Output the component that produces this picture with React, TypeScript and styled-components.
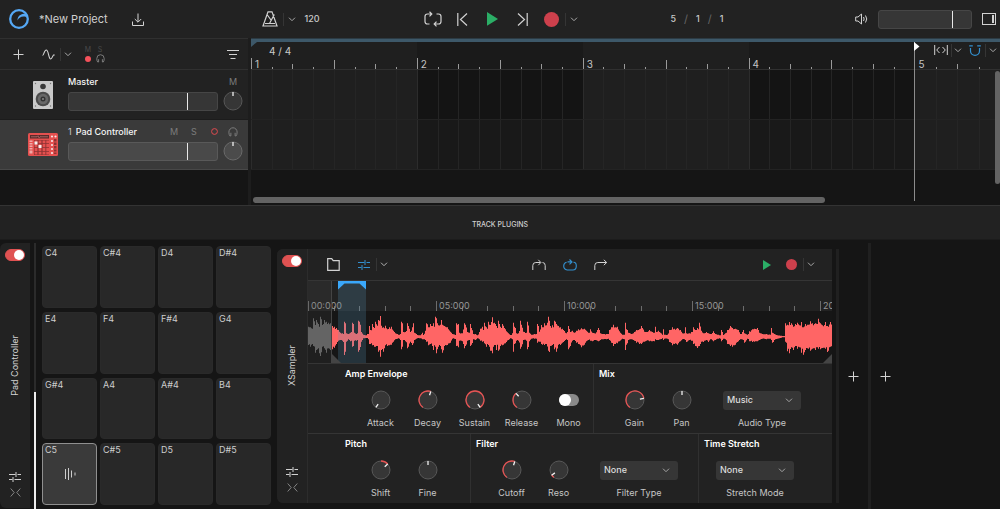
import React, { useState } from "react";
import styled, { createGlobalStyle, css } from "styled-components";

const GlobalStyle = createGlobalStyle`
  *, *::before, *::after { box-sizing: border-box; }
  html, body { margin: 0; padding: 0; background: #151515; }
  body { font-family: Inter, "Liberation Sans", sans-serif; font-size: 9px; line-height: 12px; color: #cacaca; }
  button, input, select { font: inherit; color: inherit; margin: 0; }
  svg { display: block; flex: none; }
`;

const Shell = styled.div`
  display: flex;
  flex-direction: column;
  min-height: 100vh;
  overflow: hidden;
`;

/* ---------- shared controls ---------- */

const IconButton = styled.button<{ $w?: number; $color?: string }>`
  display: flex;
  align-items: center;
  justify-content: center;
  flex: none;
  width: ${(p) => p.$w ?? 16}px;
  height: 18px;
  padding: 0;
  border: 0;
  background: none;
  color: ${(p) => p.$color ?? "#d2d2d2"};
  cursor: pointer;
`;

const Divider = styled.span`
  flex: none;
  width: 1px;
  height: 13px;
  background: #353535;
`;

const Fader = styled.input<{ $bright?: boolean }>`
  appearance: none;
  display: block;
  flex: 1;
  min-width: 0;
  width: 100%;
  height: 19px;
  border: 1px solid ${(p) => (p.$bright ? "#595959" : "#464646")};
  border-radius: 3px;
  background: ${(p) => (p.$bright ? "#494949" : "#363636")};
  &::-webkit-slider-thumb {
    appearance: none;
    width: 1px;
    height: 17px;
    background: #e8e8e8;
  }
`;

const SwitchInput = styled.input`
  appearance: none;
  flex: none;
  display: block;
  width: 20px;
  height: 12px;
  border-radius: 6px;
  background: #8a8a8a;
  cursor: pointer;
  &::before {
    content: "";
    display: block;
    width: 12px;
    height: 12px;
    border-radius: 6px;
    background: #fff;
  }
  &:checked {
    background: #e05252;
    padding-left: 8px;
    border: 1px solid #e05252;
  }
  &:checked::before { width: 10px; height: 10px; }
`;

const KnobBox = styled.span`
  position: relative;
  display: block;
  flex: none;
  width: 20px;
  height: 20px;
`;

const KnobInput = styled.input`
  position: absolute;
  inset: 0;
  width: 100%;
  height: 100%;
  opacity: 0;
  cursor: pointer;
`;

const polar = (deg: number, r: number) => {
  const a = ((deg - 90) * Math.PI) / 180;
  return `${(10 + r * Math.cos(a)).toFixed(2)} ${(10 + r * Math.sin(a)).toFixed(2)}`;
};

function Knob({ label, value, from, fill = "#363636", ring = "#585858" }: {
  label: string; value: number; from?: number; fill?: string; ring?: string;
}) {
  const [angle, setAngle] = useState(value);
  const start = from ?? angle;
  const lo = Math.min(start, angle);
  const hi = Math.max(start, angle);
  return (
    <KnobBox>
      <svg width="20" height="20" viewBox="0 0 20 20" fill="none">
        <circle cx="10" cy="10" r="9" fill={fill} stroke={ring} />
        {hi > lo && (
          <path d={`M${polar(lo, 9)}A9 9 0 ${hi - lo > 180 ? 1 : 0} 1 ${polar(hi, 9)}`} stroke="#e55353" strokeWidth="1.3" />
        )}
        <path d={`M${polar(angle, 5)}L${polar(angle, 9)}`} stroke="#f2f2f2" strokeWidth="1.3" />
      </svg>
      <KnobInput type="range" min={-145} max={145} value={angle} aria-label={label}
        onChange={(e) => setAngle(Number(e.target.value))} />
    </KnobBox>
  );
}

/* ---------- icons ---------- */

const Chevron = () => (
  <svg width="8" height="5" viewBox="0 0 8 5" fill="none" stroke="currentColor"><path d="M1 .7l3 3 3-3" /></svg>
);
const Plus = () => (
  <svg width="11" height="11" viewBox="0 0 11 11" stroke="currentColor"><path d="M5.5 .5v10M.5 5.5h10" /></svg>
);
const Headphones = ({ size = 10 }: { size?: number }) => (
  <svg width={size} height={size} viewBox="0 0 9 9" fill="none" stroke="currentColor">
    <path d="M2.6 8H1.7Q.8 7 .8 4.6A3.7 3.9 0 0 1 8.2 4.6Q8.2 7 7.3 8H6.4V5.2M2.6 8V5.2" strokeWidth=".9" />
  </svg>
);
const Logo = () => (
  <svg width="20" height="20" viewBox="0 0 20 20" fill="none">
    <circle cx="10" cy="10" r="8.8" stroke="#55a8f5" strokeWidth="2.3" />
    <path d="M17.6 6.2C16 4.4 14 4.600 12.200 5.400C9.500 6.600 8.200 8.800 8.600 11.400C9.500 9.100 11.500 7.700 14.500 7.500C16 7.400 17 7.900 18 8.800Z" fill="#55a8f5" />
  </svg>
);
const Download = () => (
  <svg width="12" height="13" viewBox="0 0 12 13" fill="none" stroke="currentColor">
    <path d="M6 .5v8.500M2.800 6L6 9.200 9.200 6M.5 8.500v4h11v-4" />
  </svg>
);
const Metronome = () => (
  <svg width="16" height="16" viewBox="0 0 16 16" fill="none" stroke="currentColor" strokeWidth="1.200">
    <path d="M6 .8h4L15 15H1L6 .8zM3 12.500h10M7.500 12.500L12.300 3.500M5 3.500L9 9" />
  </svg>
);
const Cycle = () => (
  <svg width="18" height="16" viewBox="0 0 18 16" fill="none" stroke="currentColor" strokeWidth="1.200">
    <path d="M7.500 3H3.500Q1 3 1 5.500v5Q1 13 3.500 13H5.500M5.500 .8L7.800 3 5.500 5.300M10.500 13h4Q17 13 17 10.500v-5Q17 3 14.500 3H12.500M12.500 10.700L10.200 13l2.300 2.300" />
  </svg>
);
const SkipBack = () => (
  <svg width="11" height="13" viewBox="0 0 11 13" fill="none" stroke="currentColor" strokeWidth="1.200"><path d="M.8 0v13M10 .5L3.500 6.500l6.500 6" /></svg>
);
const SkipForward = () => (
  <svg width="11" height="13" viewBox="0 0 11 13" fill="none" stroke="currentColor" strokeWidth="1.200"><path d="M10.200 0v13M1 .5l6.500 6L1 12.500" /></svg>
);
const PlayShape = ({ size }: { size: number }) => (
  <svg width={size} height={size * 1.25} viewBox="0 0 8 10"><path d="M0 0L8 5 0 10z" fill="#2bae66" /></svg>
);
const RecordShape = ({ size, color = "#cd404c" }: { size: number; color?: string }) => (
  <svg width={size} height={size} viewBox="0 0 10 10"><circle cx="5" cy="5" r="5" fill={color} /></svg>
);
const Speaker = () => (
  <svg width="13" height="12" viewBox="0 0 13 12" fill="none" stroke="currentColor">
    <path d="M.7 4v4H3l3.500 3V1L3 4H.7zM8.500 4q1.300 2 0 4M10.500 2.500q2.500 3.500 0 7" />
  </svg>
);
const SidePanel = () => (
  <svg width="14" height="12" viewBox="0 0 14 12" fill="none" stroke="currentColor">
    <rect x=".5" y=".5" width="13" height="11" /><path d="M11 2v8" strokeWidth="2" />
  </svg>
);
const Curve = () => (
  <svg width="13" height="11" viewBox="0 0 13 11" fill="none" stroke="currentColor" strokeWidth="1.100">
    <path d="M.5 6.500C2 6.500 2 1 4.300 1S6.500 10 8.700 10c1.500 0 1.800-3.500 3-4" /><circle cx="12" cy="6" r=".7" fill="currentColor" stroke="none" />
  </svg>
);
const FilterLines = () => (
  <svg width="12" height="9" viewBox="0 0 12 9" stroke="currentColor"><path d="M0 .5h12M2 4.500h8M3.500 8.500h5" /></svg>
);
const FitWidth = () => (
  <svg width="14" height="10" viewBox="0 0 14 10" fill="none" stroke="currentColor"><path d="M.7 0v10M13.300 0v10M5.500 2L2.700 5l2.800 3M8.500 2l2.800 3-2.800 3" /></svg>
);
const Magnet = () => (
  <svg width="12" height="11" viewBox="0 0 12 11" fill="none" stroke="currentColor" strokeWidth="1.200">
    <path d="M.2 .8h3.600M8.200 .8h3.600M1.500 3v3a4.500 4.300 0 0 0 9 0V3" />
  </svg>
);
const Mixer = () => (
  <svg width="12" height="10" viewBox="0 0 12 10" fill="none" stroke="currentColor">
    <path d="M0 2.500h6.500M8.500 2.500H12M7 0v5M0 7.500h3.500M5.500 7.500H12M4 5v5" />
  </svg>
);
const Collapse = () => (
  <svg width="11" height="9" viewBox="0 0 11 9" fill="none" stroke="currentColor" strokeWidth=".9"><path d="M.7 .5l3.500 4-3.500 4M10.300 .5l-3.500 4 3.500 4" /></svg>
);
const Folder = () => (
  <svg width="13" height="13" viewBox="0 0 13 13" fill="none" stroke="currentColor" strokeWidth="1.200"><path d="M.7 .7h4l1.500 2h6v9.600H.7z" /></svg>
);
const TrimLeft = () => (
  <svg width="14" height="12" viewBox="0 0 14 12" fill="none" stroke="currentColor">
    <path d="M.8 11V6.500Q.8 3.500 3.800 3.500H8.500M6.300 .8L8.900 3.500 6.300 6.200M10.500 3.500Q13.200 3.500 13.200 6.500V11" />
  </svg>
);
const LoopMode = () => (
  <svg width="14" height="12" viewBox="0 0 14 12" fill="none" stroke="currentColor" strokeWidth="1.100">
    <path d="M3.600 3.200Q.7 3.800 .7 7T4.200 11h5.600q3.500 0 3.500-4T10.400 3.200M4.500 2.900H8.800M6.500 .5L9 2.900 6.500 5.300" />
  </svg>
);
const OneShot = () => (
  <svg width="14" height="12" viewBox="0 0 14 12" fill="none" stroke="currentColor">
    <path d="M.8 11V6.500Q.8 3.500 3.800 3.500H12.500M9.800 .8l2.900 2.700-2.900 2.700" />
  </svg>
);
const PadWave = () => (
  <svg width="12" height="12" viewBox="0 0 12 12" stroke="currentColor"><path d="M1.500 1v10M4.500 0v12M7.500 2.500v7M11 4.500v3" /></svg>
);
const Monitor = () => (
  <svg width="20" height="28" viewBox="0 0 20 28">
    <rect width="20" height="28" rx="1" fill="#c9c9c9" />
    <g fill="#777"><circle cx="2.500" cy="2.500" r=".7" /><circle cx="17.500" cy="2.500" r=".7" /><circle cx="2.500" cy="25" r=".7" /><circle cx="17.500" cy="25" r=".7" /></g>
    <circle cx="10" cy="5.500" r="2.800" fill="#3a3a3a" />
    <circle cx="10" cy="18" r="7.300" fill="#4a4a4a" /><circle cx="10" cy="18" r="5.200" fill="#686868" />
    <circle cx="10" cy="18" r="2.500" fill="#333" /><circle cx="10" cy="18" r="1" fill="#888" />
  </svg>
);
const DrumMachine = () => (
  <svg width="30" height="23" viewBox="0 0 30 23">
    <rect width="30" height="23" rx="1.500" fill="#e4504f" />
    <rect x="2" y="2" width="19" height="3.500" fill="#5a2b2b" /><path d="M3 3.800h6l1-1 1 2 1-1h8" stroke="#ee9a98" strokeWidth=".5" fill="none" />
    <path d="M1.500 7.500h3v13h-3z" fill="#f0a8a6" /><path d="M1 9.500h4M1 12h4M1 14.500h4M1 17h4" stroke="#e4504f" />
    <rect x="6" y="7" width="15" height="15" fill="#8e3333" />
    <path d="M8 7.500v14M12 7.500v14M16 7.500v14M19.700 7.500v14" stroke="#e4504f" strokeWidth="2.800" />
    <path d="M6 10.500h15M6 14.500h15M6 18.500h15" stroke="#8e3333" strokeWidth=".8" />
    <path d="M6.500 8.500h3v3h-3zM10.500 12h3v3h-3z" fill="#f6eeee" />
    <g fill="#f6e4e4"><circle cx="24" cy="3.500" r="1.100" /><circle cx="27.500" cy="3.500" r="1.100" /><circle cx="24" cy="8" r="1.100" /><circle cx="24" cy="12" r="1.100" /><circle cx="24" cy="16" r="1.100" /><circle cx="24" cy="20" r="1.100" /></g>
    <path d="M26 6h2.500v15H26z" fill="#8e3333" /><path d="M26 9h3M26 12.500h3M26 16h3M26 19h3" stroke="#e4504f" />
  </svg>
);

/* ---------- top bar ---------- */

const TopBar = styled.header`
  display: grid;
  grid-template-columns: 1fr auto 1fr;
  align-items: center;
  height: 38px;
  background: #222;
`;
const Group = styled.div<{ $gap?: number; $end?: boolean }>`
  display: flex;
  align-items: center;
  gap: ${(p) => p.$gap ?? 0}px;
  ${(p) => p.$end && css`justify-content: flex-end;`}
`;
const TopLeft = styled(Group)`
  justify-content: space-between;
  padding: 0 103px 0 9px;
`;
const TopRight = styled(Group)`
  justify-content: space-between;
  padding: 0 3px 0 93px;
`;
const ProjectName = styled.h1`
  margin: 0 14px 0 2px;
  font-size: 11px;
  line-height: 14px;
  font-weight: 400;
  color: #d0d0d0;
`;
const Readout = styled.span`
  font-weight: 500;
  color: #c8c8c8;
`;
const Slash = styled.span`
  color: #666;
  font-size: 11px;
`;
const VolumeWrap = styled.div`
  display: flex;
  width: 94px;
`;

/* ---------- arrangement ---------- */

const Arrangement = styled.section`
  display: flex;
  height: 167px;
  background: #151515;
`;
const TrackColumn = styled.div`
  flex: none;
  width: 251px;
  border-right: 3px solid #1d1d1d;
`;
const TrackTools = styled.div`
  display: flex;
  align-items: center;
  gap: 2px;
  height: 32px;
  padding: 0 7px 0 10px;
  background: #222;
  border-top: 1px solid #303030;
  border-bottom: 1px solid #303030;
`;
const ToolSpacer = styled.span`
  flex: 1;
`;
const GlobalFlags = styled.div`
  display: grid;
  grid-template-columns: 12px 12px;
  grid-template-rows: 9px 9px;
  margin-left: 8px;
`;
const Flag = styled.button<{ $color?: string }>`
  display: flex;
  align-items: center;
  justify-content: center;
  padding: 0;
  border: 0;
  background: none;
  font-size: 7px;
  line-height: 9px;
  color: ${(p) => p.$color ?? "#4a4a4a"};
`;
const TrackRow = styled.div<{ $active?: boolean }>`
  display: grid;
  grid-template-columns: 68px 1fr 30px;
  align-items: center;
  height: 50px;
  background: ${(p) => (p.$active ? "#3a3a3a" : "#222")};
  border-bottom: 1px solid ${(p) => (p.$active ? "#484848" : "#1c1c1c")};
`;
const TrackIcon = styled.span`
  display: flex;
  justify-content: center;
  padding-left: 18px;
`;
const TrackMain = styled.div`
  display: flex;
  flex-direction: column;
  gap: 3px;
  padding-bottom: 4px;
`;
const TrackHead = styled.div`
  display: flex;
  align-items: center;
  height: 14px;
  gap: 4px;
`;
const TrackName = styled.span`
  flex: 1;
  font-weight: 500;
  color: #f4f4f4;
`;
const TrackEnd = styled(TrackMain)`
  align-items: center;
  gap: 2px;
`;
const TrackFlag = styled.button<{ $color?: string }>`
  display: flex;
  align-items: center;
  justify-content: center;
  width: 8px;
  height: 14px;
  padding: 0;
  border: 0;
  background: none;
  color: ${(p) => p.$color ?? "#7c7c7c"};
`;

const Timeline = styled.div`
  position: relative;
  flex: 1;
  min-width: 0;
  display: flex;
  flex-direction: column;
`;
const LoopStrip = styled.div`
  height: 4px;
  background: #3d5869;
  border-top: 1px solid #2c3b44;
`;
const LoopStart = styled.svg`
  position: absolute;
  top: 4px;
  left: 0;
  z-index: 1;
`;
const Bars = styled.div`
  display: flex;
`;
const Bar = styled.div<{ $grow: number }>`
  position: relative;
  flex: ${(p) => p.$grow} 1 0;
  min-width: 0;
`;
const BarRuler = styled.div<{ $dark: boolean }>`
  position: relative;
  display: flex;
  align-items: flex-end;
  height: 28px;
  background: ${(p) => (p.$dark ? "#1a1a1a" : "#1f1f1f")};
  border-bottom: 1px solid #303030;
`;
const BarNumber = styled.span`
  position: absolute;
  left: 4px;
  bottom: -1px;
  font-size: 10px;
  color: #c4c4c4;
`;
const Tick = styled.span<{ $h: number }>`
  flex: 1;
  height: ${(p) => p.$h}px;
  border-left: 1px solid #9a9a9a;
`;
const Lane = styled.div<{ $bg: string }>`
  display: flex;
  height: 50px;
  background: ${(p) => p.$bg};
  border-bottom: 1px solid #232323;
`;
const LaneCell = styled.span<{ $strong: boolean }>`
  flex: 1;
  border-left: 1px solid ${(p) => (p.$strong ? "#2c2c2c" : "#252525")};
`;
const Playhead = styled.div`
  position: absolute;
  z-index: 2;
  top: 0;
  left: 0;
  width: 1px;
  height: 159px;
  background: #8c8c8c;
`;
const PlayheadFlag = styled.svg`
  position: absolute;
  top: 0;
  left: 0;
`;
const Signature = styled.span`
  position: absolute;
  top: 7px;
  left: 18px;
  font-size: 10px;
  color: #cacaca;
`;
const TimelineTools = styled.div`
  position: absolute;
  top: 3px;
  right: 3px;
  display: flex;
  align-items: center;
  gap: 6px;
`;
const ScrollX = styled.div`
  position: absolute;
  left: 2px;
  right: 175px;
  bottom: 2px;
  height: 6px;
  border-radius: 3px;
  background: #636363;
`;
const ScrollY = styled.div`
  position: absolute;
  right: 0;
  top: 33px;
  width: 5px;
  height: 113px;
  border-radius: 3px;
  background: #636363;
`;

/* ---------- plugin rack ---------- */

const RackTitle = styled.h2`
  margin: 0;
  height: 35px;
  border-top: 1px solid #333;
  border-bottom: 1px solid #1c1c1c;
  background: #222;
  font-size: 7px;
  line-height: 37px;
  font-weight: 500;
  text-align: center;
  color: #cfcfcf;
`;
const Rack = styled.section`
  flex: 1;
  display: flex;
  align-items: stretch;
  background: #151515;
`;
const Strip = styled.div`
  display: flex;
  flex-direction: column;
  align-items: center;
  justify-content: space-between;
  flex: none;
  width: 30px;
  padding: 6px 0 8px;
  background: #222;
  border-radius: 6px 0 0 6px;
`;
const PadStripWrap = styled.div`
  display: flex;
  padding: 3px 0 1px;
`;
const StripName = styled.span`
  writing-mode: vertical-rl;
  transform: rotate(180deg);
  color: #d4d4d4;
`;
const StripButtons = styled.div`
  display: flex;
  flex-direction: column;
  align-items: center;
  gap: 1px;
`;
const StripButton = styled(IconButton)`
  height: 15px;
`;
const PadScroll = styled.div`
  display: flex;
  flex-direction: column;
  justify-content: flex-end;
  flex: none;
  width: 2px;
  margin: 3px 6px 0 4px;
  background: #2b2b2b;
`;
const PadThumb = styled.div`
  height: 44%;
  background: #ededed;
`;
const PadGrid = styled.div`
  flex: none;
  display: grid;
  grid-template-columns: repeat(4, 55px);
  grid-auto-rows: 1fr;
  gap: 4px 3px;
  padding: 6px 0 4px;
`;
const Pad = styled.button<{ $active: boolean }>`
  display: flex;
  flex-direction: column;
  align-items: stretch;
  padding: 0 2px;
  border: 1px solid ${(p) => (p.$active ? "#8f8f8f" : "#2a2a2a")};
  border-radius: 4px;
  background: ${(p) => (p.$active ? "#3a3a3a" : "#282828")};
  text-align: left;
  color: #cdcdcd;
`;
const PadIcon = styled.span`
  flex: 1;
  display: flex;
  align-items: center;
  justify-content: center;
  padding-bottom: 12px;
`;
const Sampler = styled.article`
  flex: 1;
  min-width: 0;
  display: flex;
  margin: 9px 4px 6px 6px;
  border-radius: 6px 0 0 6px;
  background: #222;
`;
const SamplerBody = styled.div`
  flex: 1;
  min-width: 0;
  display: flex;
  flex-direction: column;
  border-left: 1px solid #2c2c2c;
`;
const SamplerBar = styled.div`
  display: grid;
  grid-template-columns: 1fr auto 1fr;
  align-items: center;
  height: 32px;
  padding: 0 17px;
  border-bottom: 1px solid #353535;
`;
const WaveArea = styled.div`
  position: relative;
  flex: none;
  height: 82px;
  overflow: hidden;
  background: #161616;
`;
const WaveRuler = styled.div`
  display: flex;
  height: 30px;
  background: #222;
`;
const RulerMark = styled.div`
  position: relative;
  flex: none;
  display: flex;
  align-items: flex-end;
  width: 128px;
  color: #969696;
`;
const RulerLabel = styled.span`
  position: absolute;
  left: 3px;
  bottom: -1px;
`;
const RulerTick = styled.span<{ $major: boolean }>`
  flex: 1;
  height: ${(p) => (p.$major ? 10 : 5)}px;
  border-left: 1px solid #6c6c6c;
`;
const WaveSvg = styled.svg`
  width: 100%;
  height: 52px;
`;
const WaveHead = styled.div`
  position: absolute;
  top: 0;
  left: 0;
  bottom: 0;
  width: 24px;
  background: rgba(90, 90, 90, 0.14);
  border-right: 1px solid #444;
`;
const Region = styled.div`
  position: absolute;
  top: 0;
  left: 30px;
  bottom: 0;
  width: 28px;
  background: rgba(90, 155, 190, 0.22);
`;
const CornerMark = styled.svg<{ $right?: boolean }>`
  position: absolute;
  bottom: 0;
  ${(p) => (p.$right ? css`right: 0;` : css`left: 24px;`)}
`;
const ParamRow = styled.div`
  flex: 1 0 70px;
  display: flex;
  border-top: 1px solid #353535;
`;
const Section = styled.section<{ $grow?: boolean; $first?: boolean }>`
  min-width: 0;
  display: flex;
  flex-direction: column;
  flex: ${(p) => (p.$grow ? "1 0 0" : "none")};
  padding: 4px 0 0 ${(p) => (p.$first ? 37 : 5)}px;
  border-left: ${(p) => (p.$first ? 0 : 1)}px solid #303030;
`;
const SectionTitle = styled.h3`
  margin: 0;
  font-size: 9px;
  font-weight: 600;
  color: #fff;
`;
const Params = styled.div<{ $end?: number }>`
  display: flex;
  padding: 10px ${(p) => p.$end ?? 0}px 0 12px;
`;
const Param = styled.label<{ $select?: boolean }>`
  display: flex;
  flex-direction: column;
  align-items: center;
  gap: 7px;
  flex: none;
  width: ${(p) => (p.$select ? 78 : 47)}px;
  white-space: nowrap;
  color: #c6c6c6;
  &:not(:first-child) { margin-left: ${(p) => (p.$select ? 18 : 0)}px; }
`;
const ParamControl = styled.span`
  display: flex;
  align-items: center;
  justify-content: center;
  position: relative;
  width: 100%;
  height: 20px;
`;
const Select = styled.select`
  appearance: none;
  width: 100%;
  height: 19px;
  padding: 0 4px;
  border: 0;
  border-radius: 3px;
  background: #363636;
  font-weight: 500;
  color: #dcdcdc;
`;
const SelectArrow = styled.span`
  position: absolute;
  right: 8px;
  top: 8px;
  color: #a4a4a4;
  pointer-events: none;
`;
const AddColumn = styled.div<{ $short?: boolean }>`
  flex: none;
  display: flex;
  align-items: center;
  width: ${(p) => (p.$short ? 32 : 132)}px;
  margin: ${(p) => (p.$short ? "9px 0 6px" : "3px 0 0")};
  padding-left: 3px;
  border-left: 3px solid #202020;
`;

/* Each sample is "position,above,below"; every take starts at its own offset. */
const TAKES: [number, string][] = [
  [-12, "13,30,25 20,28,30 26,24,22 29,55,28 33,35,48 38,50,40 42,38,35 47,30,50 50,60,58 54,35,30 60,50,35 66,45,48 72,42,35 78,40,40 82,38,30 84,32,38 90,30,33 96,26,22 102,20,12 108,12,10 114,10,12 119,8,16 121,45,55 125,40,45 128,10,15 133,8,8 138,12,14 142,14,12 144,42,30 147,38,28 150,12,12 157,8,12 161,10,10 163,48,45 167,45,40 171,14,15 178,6,5 186,4,4 190,8,4 194,8,8 197,32,22 200,20,22 206,38,26 210,26,30 215,45,30 220,33,28 224,50,45 228,62,60 232,33,40 238,28,45 244,33,26 250,22,28 255,28,26 262,30,24 268,18,15 275,10,8 283,6,5 289,8,10 291,45,38 295,40,30 298,14,10 305,14,14 309,40,35 313,32,30 318,14,15 324,28,25 328,40,20 332,12,10 340,5,5 347,4,5 354,12,8 358,5,8 364,18,10 368,40,15 374,28,26 380,38,22 387,40,40 391,30,26 394,60,30 397,55,50 402,34,30 408,36,28 412,50,38 416,36,48 422,32,28 430,28,25 438,15,18 446,8,6 454,5,7 458,40,28 462,38,32 466,12,12 475,10,14 480,40,35 485,36,28 490,14,12 495,12,10 498,38,28 503,26,24 508,8,8 514,8,10 520,4,5 525,14,8"],
  [516, "2,24,12 6,30,15 9,20,14 12,42,20 18,28,30 21,24,22 24,45,25 30,35,42 36,58,50 40,40,30 44,42,25 50,32,40 53,26,24 56,48,42 62,30,28 68,38,26 76,22,20 84,10,10 92,5,5 97,10,8 100,42,45 104,30,22 110,10,12 116,10,12 120,48,36 124,36,30 130,15,10 139,12,12 143,45,38 147,12,14 155,6,6 163,8,6 170,8,6 173,38,18 178,15,15 183,35,22 188,28,24 193,40,25 198,34,22 204,60,42 208,48,46 212,32,28 218,34,25 221,28,22 224,48,38 230,38,45 236,32,24 242,28,25 250,20,16 258,10,8 263,14,10 266,32,38 270,14,28 276,18,12 282,12,10 288,18,18 296,22,22 304,25,32 312,24,24 320,18,14 326,12,10 331,22,12 336,12,14 344,10,10 352,20,12 356,26,14 360,10,10 370,8,8 378,8,8 384,8,6 388,20,10 394,28,18 399,36,28 405,28,22 411,30,20 418,16,14 426,6,6 433,6,8 436,42,40 440,22,24 446,12,10 454,8,8 462,14,12 470,20,18 478,22,22 485,32,22 492,15,15 500,14,12 508,20,14 516,14,14 522,12,14 527,30,8"],
  [1044, "1,14,10 6,18,10 14,12,8 20,6,5 22,22,10 26,6,6 34,6,6 40,20,16 48,28,26 56,24,22 64,26,24 72,20,14 80,10,8 86,10,8 88,28,10 92,10,16 100,10,10 107,14,12 112,28,22 118,20,28 125,26,34 129,20,26 131,42,28 135,18,15 142,10,16 150,14,10 156,10,16 164,8,8 172,16,14 178,8,10 186,6,6 193,4,6 197,20,14 201,5,6 208,10,8 214,20,22 222,32,28 230,26,30 238,24,24 246,20,14 254,8,8 261,20,10 266,10,18 274,6,6 280,16,14 288,22,16 296,24,15 304,26,14 310,12,10 320,8,6 330,8,8 343,6,6 346,26,10 350,12,18 356,8,10 364,4,6 372,3,4 380,2,2 387,2,2 389,40,15 394,36,44 397,34,36 400,44,50 406,40,32 412,30,40 418,38,28 424,42,36 430,34,32 437,44,48 440,28,36 442,28,54 448,38,40 456,36,36 464,46,42 470,40,36 478,40,40 484,38,32 486,54,36 492,40,38 500,34,34 508,44,36 512,32,32 515,32,46 523,44,30 528,36,36"],
];

const WAVE_MID = 77;
const STEP = 3;
const peaks = TAKES.flatMap(([start, text]) =>
  text.split(" ").map((s) => {
    const [x, up, down] = s.split(",").map(Number);
    return { x: x + start, up, down };
  })
);

/* Deterministic grain, so that columns between two peaks vary a little. */
const grain = (i: number) => {
  const v = Math.sin(i * 12.9898) * 43758.5453;
  return v - Math.floor(v);
};
const columns = Array.from({ length: 524 }, (_, i) => {
  const lo = i * STEP;
  const hit = peaks.filter((p) => p.x >= lo && p.x < lo + STEP);
  if (hit.length) {
    return { x: lo, up: Math.max(...hit.map((p) => p.up)), down: Math.max(...hit.map((p) => p.down)) };
  }
  const next = Math.max(1, peaks.findIndex((p) => p.x >= lo));
  const a = peaks[next - 1];
  const b = peaks[next];
  const t = Math.min(1, Math.max(0, (lo - a.x) / (b.x - a.x)));
  const mix = (m: number, n: number, seed: number) => (m + (n - m) * t) * (0.82 + 0.16 * grain(seed));
  return { x: lo, up: mix(a.up, b.up, i), down: mix(a.down, b.down, i + 900) };
});
/* One closed outline: along the upper steps, then back along the lower ones. */
const wavePath = (list: typeof columns) => {
  const top = list.map((c) => `${c.x} ${(WAVE_MID - c.up).toFixed(1)}h${STEP}`).join("L");
  const bottom = [...list].reverse().map((c) => `${c.x + STEP} ${(WAVE_MID + c.down).toFixed(1)}h-${STEP}`).join("L");
  return `M${top}L${bottom}Z`;
};
const HEAD_COLUMNS = 24;
const headWave = wavePath(columns.slice(0, HEAD_COLUMNS));
const mainWave = wavePath(columns.slice(HEAD_COLUMNS));

const BAR_LIST = [
  { n: 1, cells: 8, grow: 31 },
  { n: 2, cells: 8, grow: 31 },
  { n: 3, cells: 8, grow: 31 },
  { n: 4, cells: 8, grow: 31 },
  { n: 5, cells: 4, grow: 16 },
];
const tickHeight = (i: number) => (i === 0 ? 11 : i === 4 ? 9 : i % 2 === 0 ? 5 : 2);

const PADS = ["C4", "C#4", "D4", "D#4", "E4", "F4", "F#4", "G4", "G#4", "A4", "A#4", "B4", "C5", "C#5", "D5", "D#5"];

function KnobParam({ label, value, from }: { label: string; value: number; from?: number }) {
  return (
    <Param>
      <ParamControl><Knob label={label} value={value} from={from} /></ParamControl>
      {label}
    </Param>
  );
}

function SelectParam({ label, value, options }: { label: string; value: string; options: string[] }) {
  return (
    <Param $select>
      <ParamControl>
        <Select defaultValue={value}>{options.map((o) => <option key={o}>{o}</option>)}</Select>
        <SelectArrow><Chevron /></SelectArrow>
      </ParamControl>
      {label}
    </Param>
  );
}

function StripContent({ name }: { name: string }) {
  return (
    <Strip>
      <SwitchInput type="checkbox" defaultChecked aria-label={`${name} on`} />
      <StripName>{name}</StripName>
      <StripButtons>
        <StripButton aria-label="Parameters"><Mixer /></StripButton>
        <StripButton aria-label="Collapse" $color="#8f8f8f"><Collapse /></StripButton>
      </StripButtons>
    </Strip>
  );
}

export default function App() {
  const [activePad, setActivePad] = useState("C5");
  return (
    <Shell>
      <GlobalStyle />
      <TopBar>
        <TopLeft>
          <Group $gap={8}>
            <Logo />
            <ProjectName>*New Project</ProjectName>
            <IconButton aria-label="Save"><Download /></IconButton>
          </Group>
          <Group $gap={8}>
            <Group $gap={4}>
              <IconButton $w={18} aria-label="Metronome"><Metronome /></IconButton>
              <Divider />
              <IconButton $w={8} $color="#a8a8a8" aria-label="Metronome options"><Chevron /></IconButton>
            </Group>
            <Readout>120</Readout>
          </Group>
        </TopLeft>
        <Group $gap={11}>
          <IconButton $w={20} aria-label="Cycle"><Cycle /></IconButton>
          <IconButton $w={18} aria-label="To start"><SkipBack /></IconButton>
          <IconButton $w={20} aria-label="Play"><PlayShape size={11} /></IconButton>
          <IconButton $w={18} aria-label="To end"><SkipForward /></IconButton>
          <Group $gap={4}>
            <IconButton $w={18} aria-label="Record"><RecordShape size={15} /></IconButton>
            <Divider />
            <IconButton $w={8} $color="#a8a8a8" aria-label="Record options"><Chevron /></IconButton>
          </Group>
        </Group>
        <TopRight>
          <Group $gap={8}>
            <Readout>5</Readout><Slash>/</Slash>
            <Readout>1</Readout><Slash>/</Slash>
            <Readout>1</Readout>
          </Group>
          <Group $gap={9}>
            <IconButton $w={16} aria-label="Mute output"><Speaker /></IconButton>
            <VolumeWrap><Fader type="range" defaultValue={80} aria-label="Output volume" /></VolumeWrap>
            <IconButton $w={16} aria-label="Side panel"><SidePanel /></IconButton>
          </Group>
        </TopRight>
      </TopBar>

      <Arrangement>
        <TrackColumn>
          <TrackTools>
            <Group $gap={12}>
              <IconButton aria-label="Add track"><Plus /></IconButton>
              <IconButton $w={20} aria-label="Automation"><Curve /></IconButton>
            </Group>
            <Group $gap={3}>
              <Divider />
              <IconButton $w={8} $color="#a8a8a8" aria-label="Automation options"><Chevron /></IconButton>
            </Group>
            <GlobalFlags>
              <Flag>M</Flag>
              <Flag>S</Flag>
              <Flag aria-label="Record all"><RecordShape size={6} color="#f5515b" /></Flag>
              <Flag aria-label="Monitor all" $color="#858585"><Headphones size={9} /></Flag>
            </GlobalFlags>
            <ToolSpacer />
            <IconButton aria-label="Filter tracks"><FilterLines /></IconButton>
          </TrackTools>
          <TrackRow>
            <TrackIcon><Monitor /></TrackIcon>
            <TrackMain>
              <TrackHead><TrackName>Master</TrackName></TrackHead>
              <Fader type="range" defaultValue={80} aria-label="Master volume" />
            </TrackMain>
            <TrackEnd>
              <TrackFlag>M</TrackFlag>
              <Knob label="Master pan" value={0} />
            </TrackEnd>
          </TrackRow>
          <TrackRow $active>
            <TrackIcon><DrumMachine /></TrackIcon>
            <TrackMain>
              <TrackHead>
                <span>1</span>
                <TrackName>Pad Controller</TrackName>
                <Group $gap={12}>
                  <TrackFlag>M</TrackFlag>
                  <TrackFlag>S</TrackFlag>
                  <TrackFlag aria-label="Arm" $color="#e04b50">
                    <svg width="7" height="7" viewBox="0 0 7 7" fill="none" stroke="currentColor"><circle cx="3.5" cy="3.5" r="2.9" /></svg>
                  </TrackFlag>
                </Group>
              </TrackHead>
              <Fader $bright type="range" defaultValue={80} aria-label="Pad Controller volume" />
            </TrackMain>
            <TrackEnd>
              <TrackFlag aria-label="Monitor"><Headphones /></TrackFlag>
              <Knob label="Pad Controller pan" value={0} fill="#4b4b4b" ring="#6a6a6a" />
            </TrackEnd>
          </TrackRow>
        </TrackColumn>

        <Timeline>
          <LoopStrip />
          <LoopStart width="6" height="5" viewBox="0 0 6 5"><path d="M0 0h6L0 5z" fill="#3d5869" /></LoopStart>
          <Bars>
            {BAR_LIST.map(({ n, cells, grow }) => {
              const dark = n % 2 === 0;
              const idx = Array.from({ length: cells }, (_, i) => i);
              return (
                <Bar key={n} $grow={grow}>
                  <BarRuler $dark={dark}>
                    {idx.map((i) => <Tick key={i} $h={tickHeight(i)} />)}
                    <BarNumber>{n}</BarNumber>
                  </BarRuler>
                  <Lane $bg={dark ? "#141414" : "#1f1f1f"}>{idx.map((i) => <LaneCell key={i} $strong={i === 0} />)}</Lane>
                  <Lane $bg={dark ? "#191919" : "#1f1f1f"}>{idx.map((i) => <LaneCell key={i} $strong={i === 0} />)}</Lane>
                  {n === 5 && (
                    <Playhead>
                      <PlayheadFlag width="6" height="9" viewBox="0 0 6 9"><path d="M0 0l5.500 4.500L0 9z" fill="#fff" /></PlayheadFlag>
                    </Playhead>
                  )}
                </Bar>
              );
            })}
          </Bars>
          <Signature>4 / 4</Signature>
          <TimelineTools>
            <Group $gap={2}>
              <IconButton aria-label="Fit to width"><FitWidth /></IconButton>
              <Divider />
              <IconButton $w={8} $color="#a8a8a8" aria-label="Fit options"><Chevron /></IconButton>
            </Group>
            <Group $gap={3}>
              <IconButton $w={14} $color="#3390cf" aria-label="Snap"><Magnet /></IconButton>
              <Divider />
              <IconButton $w={8} $color="#a8a8a8" aria-label="Snap options"><Chevron /></IconButton>
            </Group>
          </TimelineTools>
          <ScrollX />
          <ScrollY />
        </Timeline>
      </Arrangement>

      <RackTitle>TRACK PLUGINS</RackTitle>

      <Rack>
        <PadStripWrap><StripContent name="Pad Controller" /></PadStripWrap>
        <PadScroll><PadThumb /></PadScroll>
        <PadGrid>
          {PADS.map((p) => (
            <Pad key={p} $active={p === activePad} onClick={() => setActivePad(p)}>
              {p}
              {p === "C5" && <PadIcon><PadWave /></PadIcon>}
            </Pad>
          ))}
        </PadGrid>

        <Sampler>
          <StripContent name="XSampler" />
          <SamplerBody>
            <SamplerBar>
              <Group $gap={4}>
                <Group $gap={15}>
                  <IconButton aria-label="Open sample"><Folder /></IconButton>
                  <IconButton $color="#3390cf" aria-label="Parameters"><Mixer /></IconButton>
                </Group>
                <Group $gap={3}>
                  <Divider />
                  <IconButton $w={8} $color="#b4b4b4" aria-label="View options"><Chevron /></IconButton>
                </Group>
              </Group>
              <Group $gap={15}>
                <IconButton aria-label="Trigger"><TrimLeft /></IconButton>
                <IconButton $color="#3390cf" aria-label="Loop"><LoopMode /></IconButton>
                <IconButton aria-label="One shot"><OneShot /></IconButton>
              </Group>
              <Group $end $gap={4}>
                <Group $gap={8}>
                  <IconButton aria-label="Play sample"><PlayShape size={8} /></IconButton>
                  <IconButton aria-label="Record sample"><RecordShape size={11} /></IconButton>
                </Group>
                <Group $gap={3}>
                  <Divider />
                  <IconButton $w={8} $color="#a8a8a8" aria-label="Record options"><Chevron /></IconButton>
                </Group>
              </Group>
            </SamplerBar>

            <WaveArea>
              <WaveRuler>
                {["00:000", "05:000", "10:000", "15:000", "20:000"].map((t) => (
                  <RulerMark key={t}>
                    {[0, 1, 2, 3, 4].map((i) => <RulerTick key={i} $major={i === 0} />)}
                    <RulerLabel>{t}</RulerLabel>
                  </RulerMark>
                ))}
              </WaveRuler>
              <WaveSvg viewBox="0 0 1572 156" preserveAspectRatio="none">
                <path d={headWave} fill="#666" />
                <path d={mainWave} fill="#ff6565" />
              </WaveSvg>
              <WaveHead />
              <Region>
                <svg width="28" height="9" viewBox="0 0 28 9"><path d="M0 0h28v8.500L21.500 2.500h-15L0 8.500z" fill="#3aa8fb" /></svg>
              </Region>
              <CornerMark width="9" height="9" viewBox="0 0 9 9"><path d="M0 0l9 9H0z" fill="#444" /></CornerMark>
              <CornerMark $right width="9" height="9" viewBox="0 0 9 9"><path d="M9 0v9H0z" fill="#444" /></CornerMark>
            </WaveArea>

            <ParamRow>
              <Section $first>
                <SectionTitle>Amp Envelope</SectionTitle>
                <Params $end={1}>
                  <KnobParam label="Attack" value={-145} />
                  <KnobParam label="Decay" value={18} from={-145} />
                  <KnobParam label="Sustain" value={145} from={-145} />
                  <KnobParam label="Release" value={-42} from={-145} />
                  <Param>
                    <ParamControl><SwitchInput type="checkbox" /></ParamControl>
                    Mono
                  </Param>
                </Params>
              </Section>
              <Section $grow>
                <SectionTitle>Mix</SectionTitle>
                <Params>
                  <KnobParam label="Gain" value={80} from={-145} />
                  <KnobParam label="Pan" value={0} />
                  <SelectParam label="Audio Type" value="Music" options={["Music", "Speech"]} />
                </Params>
              </Section>
            </ParamRow>
            <ParamRow>
              <Section $first>
                <SectionTitle>Pitch</SectionTitle>
                <Params $end={19}>
                  <KnobParam label="Shift" value={48} from={0} />
                  <KnobParam label="Fine" value={0} />
                </Params>
              </Section>
              <Section>
                <SectionTitle>Filter</SectionTitle>
                <Params $end={20}>
                  <KnobParam label="Cutoff" value={18} from={-145} />
                  <KnobParam label="Reso" value={-125} from={-145} />
                  <SelectParam label="Filter Type" value="None" options={["None", "Low Pass", "High Pass"]} />
                </Params>
              </Section>
              <Section $grow>
                <SectionTitle>Time Stretch</SectionTitle>
                <Params>
                  <SelectParam label="Stretch Mode" value="None" options={["None", "Tempo"]} />
                </Params>
              </Section>
            </ParamRow>
          </SamplerBody>
        </Sampler>

        <AddColumn $short><IconButton $w={22} aria-label="Add plugin"><Plus /></IconButton></AddColumn>
        <AddColumn><IconButton $w={22} aria-label="Add plugin chain"><Plus /></IconButton></AddColumn>
      </Rack>
    </Shell>
  );
}
